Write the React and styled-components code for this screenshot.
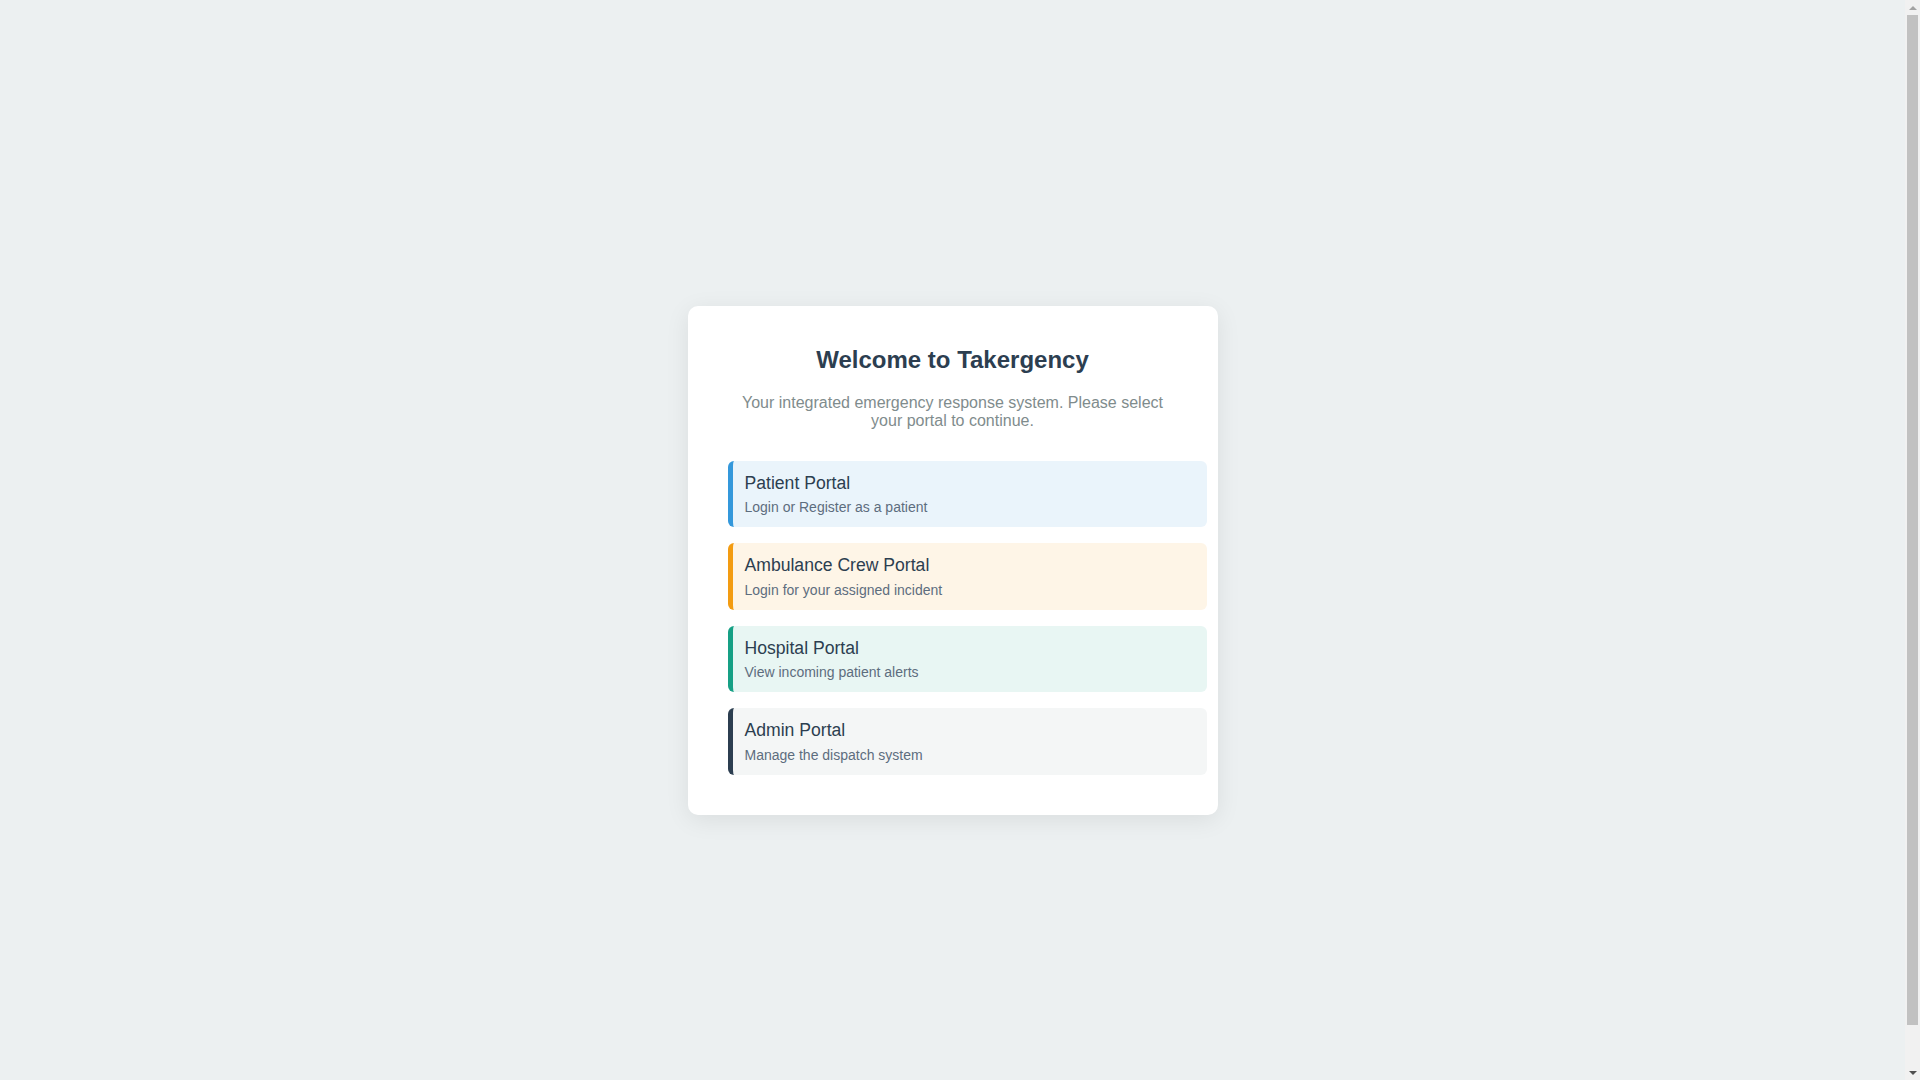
import React from "react";
import styled, { createGlobalStyle } from "styled-components";

const GlobalStyle = createGlobalStyle`
  html, body {
    margin: 0;
    padding: 0;
    background: #ecf0f1;
    font-family: "Liberation Sans", Arial, sans-serif;
  }
`;

const Page = styled.div`
  min-height: 100vh;
  padding: 20px 35px 20px 20px;
  display: flex;
  align-items: center;
  justify-content: center;
`;

const Card = styled.div`
  width: 450px;
  background: #ffffff;
  border-radius: 10px;
  padding: 40px;
  box-shadow: 0 5px 25px rgba(0, 0, 0, 0.08);
`;

const Title = styled.h1`
  margin: 0 0 20px;
  text-align: center;
  font-size: 24px;
  font-weight: 700;
  color: #2c3e50;
`;

const Subtitle = styled.p`
  margin: 0 0 31px;
  text-align: center;
  font-size: 16px;
  color: #7f8c8d;
`;

const List = styled.div`
  display: flex;
  flex-direction: column;
  gap: 16px;
`;

const PortalLink = styled.a`
  display: block;
  box-sizing: content-box;
  width: 100%;
  padding: 12px;
  border-left: 5px solid ${(p) => p.$accent};
  background: ${(p) => p.$bg};
  border-radius: 6px;
  text-decoration: none;
  cursor: pointer;
`;

const PortalTitle = styled.div`
  font-size: 17.6px;
  color: #2c3e50;
  margin-bottom: 5.5px;
`;

const PortalDesc = styled.div`
  font-size: 14px;
  color: #5d6d7e;
`;

/* Visual stand-in for the browser's classic scrollbar seen in the reference */
const ScrollTrack = styled.div`
  position: fixed;
  top: 0;
  right: 0;
  bottom: 0;
  width: 15px;
  background: #f1f1f1;
  display: flex;
  flex-direction: column;
  align-items: center;
`;

const ScrollArrow = styled.div`
  height: 15px;
  width: 15px;
  display: flex;
  align-items: center;
  justify-content: center;
  flex: none;
`;

const ScrollThumb = styled.div`
  flex: 1;
  width: 11px;
  margin-bottom: 40px;
  background: #c1c1c1;
`;

const portals = [
  { title: "Patient Portal", desc: "Login or Register as a patient", accent: "#3498db", bg: "#eaf4fb" },
  { title: "Ambulance Crew Portal", desc: "Login for your assigned incident", accent: "#f39c12", bg: "#fef5e7" },
  { title: "Hospital Portal", desc: "View incoming patient alerts", accent: "#16a085", bg: "#e8f6f3" },
  { title: "Admin Portal", desc: "Manage the dispatch system", accent: "#2c3e50", bg: "#f4f6f6" },
];

export default function App() {
  return (
    <>
      <GlobalStyle />
      <Page>
        <Card>
          <Title>Welcome to Takergency</Title>
          <Subtitle>
            Your integrated emergency response system. Please select your portal to continue.
          </Subtitle>
          <List>
            {portals.map((p) => (
              <PortalLink key={p.title} $accent={p.accent} $bg={p.bg}>
                <PortalTitle>{p.title}</PortalTitle>
                <PortalDesc>{p.desc}</PortalDesc>
              </PortalLink>
            ))}
          </List>
        </Card>
      </Page>
      <ScrollTrack>
        <ScrollArrow>
          <svg width="8" height="4" viewBox="0 0 8 4">
            <path d="M0 4 L4 0 L8 4 Z" fill="#a3a3a3" />
          </svg>
        </ScrollArrow>
        <ScrollThumb />
        <ScrollArrow>
          <svg width="8" height="4" viewBox="0 0 8 4">
            <path d="M0 0 L8 0 L4 4 Z" fill="#505050" />
          </svg>
        </ScrollArrow>
      </ScrollTrack>
    </>
  );
}
